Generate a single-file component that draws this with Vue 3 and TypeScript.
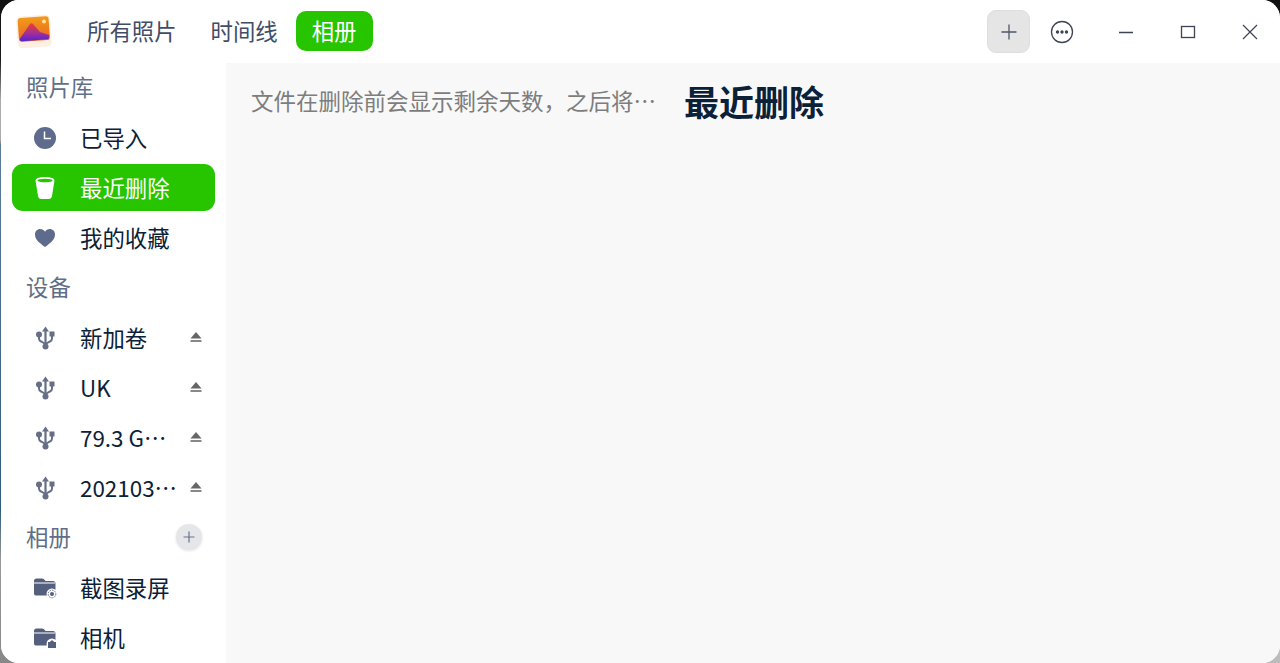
<template>
  <div class="window">
    <header class="titlebar">
      <svg class="logo" viewBox="0 0 36 36" width="36" height="36">
        <defs>
          <linearGradient id="sky" x1="0" y1="0" x2="0" y2="1">
            <stop offset="0" stop-color="#f39a1c" />
            <stop offset="1" stop-color="#e8641e" />
          </linearGradient>
          <linearGradient id="hill" x1="0" y1="0" x2="0" y2="1">
            <stop offset="0" stop-color="#e8402c" />
            <stop offset="0.55" stop-color="#a52f96" />
            <stop offset="1" stop-color="#4f22d8" />
          </linearGradient>
        </defs>
        <rect x="1" y="1.500" width="34" height="32" rx="5" fill="#fbf0e2" transform="rotate(-4 18 18)" />
        <rect x="2.500" y="3" width="31" height="24" rx="3" fill="url(#sky)" transform="rotate(-4 18 18)" />
        <path d="M4 24.500 L14 10 Q15.500 8.500 17 10 L24 18 L33 21 L33 23.500 Q33 25 31 25.300 L6 27.200 Q3.500 27.200 4 24.500 Z" fill="url(#hill)" />
        <circle cx="28" cy="7.500" r="2" fill="#ffe39a" />
      </svg>
      <nav class="tabs">
        <button v-for="tab in tabs" :key="tab" class="tab" :class="{ active: tab === '相册' }">{{ tab }}</button>
      </nav>
      <div class="actions">
        <button class="add-btn" aria-label="导入">
          <svg viewBox="0 0 18 18" width="18" height="18">
            <path d="M9 1.500v15M1.500 9h15" stroke="#4f5666" stroke-width="1.300" fill="none" />
          </svg>
        </button>
        <button class="icon-btn menu-btn" aria-label="菜单">
          <svg viewBox="0 0 24 24" width="24" height="24">
            <circle cx="12" cy="12" r="10.500" stroke="#3d4453" stroke-width="1.300" fill="none" />
            <circle cx="7.500" cy="12" r="1.700" fill="#3d4453" />
            <circle cx="12" cy="12" r="1.700" fill="#3d4453" />
            <circle cx="16.500" cy="12" r="1.700" fill="#3d4453" />
          </svg>
        </button>
        <button class="icon-btn win-btn" aria-label="最小化">
          <svg viewBox="0 0 16 16" width="16" height="16">
            <path d="M1 8.500h14" stroke="#3d4453" stroke-width="1.300" fill="none" />
          </svg>
        </button>
        <button class="icon-btn win-btn" aria-label="最大化">
          <svg viewBox="0 0 16 16" width="16" height="16">
            <rect x="1.500" y="2.500" width="13" height="11" stroke="#3d4453" stroke-width="1.300" fill="none" />
          </svg>
        </button>
        <button class="icon-btn win-btn" aria-label="关闭">
          <svg viewBox="0 0 16 16" width="16" height="16">
            <path d="M1 1l14 14M15 1L1 15" stroke="#3d4453" stroke-width="1.200" fill="none" />
          </svg>
        </button>
      </div>
    </header>

    <div class="body">
      <aside class="sidebar">
        <template v-for="group in groups" :key="group.title">
          <div class="section">
            <span class="section-title">{{ group.title }}</span>
            <button v-if="group.canAdd" class="section-add" aria-label="新建相册">
              <svg viewBox="0 0 12 12" width="12" height="12">
                <path d="M6 0.500v11M0.500 6h11" stroke="#6b7488" stroke-width="1.200" fill="none" />
              </svg>
            </button>
          </div>
          <div v-for="item in group.items" :key="item.label" class="row" :class="{ selected: item.selected }">
            <span class="row-icon">
              <svg v-if="item.icon === 'clock'" viewBox="0 0 24 24" width="24" height="24">
                <circle cx="12" cy="12" r="11" fill="#5f6b8c" />
                <path d="M11.500 5.500v7h6.500" stroke="#fff" stroke-width="1.500" fill="none" />
              </svg>
              <svg v-else-if="item.icon === 'trash'" viewBox="0 0 24 24" width="24" height="24">
                <path d="M2.500 4.500Q2.500 1 12 1t9.500 3.500L19 20q-.4 3-3.500 3h-7Q5.400 23 5 20Z" fill="#fff" />
                <ellipse cx="12" cy="4.500" rx="7.500" ry="1.700" fill="#27c400" />
              </svg>
              <svg v-else-if="item.icon === 'heart'" viewBox="0 0 24 24" width="24" height="24">
                <path d="M12 21C6 16.500 2 13.500 2 8.500 2 5.300 4.300 3 7.200 3c2 0 3.700 1 4.800 2.800C13.100 4 14.800 3 16.800 3 19.700 3 22 5.300 22 8.500c0 5-4 8-10 12.500Z" fill="#5f6b8c" />
              </svg>
              <svg v-else-if="item.icon === 'usb'" viewBox="0 0 24 24" width="24" height="24">
                <path d="M12.500 3v17" stroke="#666f85" stroke-width="2.200" fill="none" />
                <path d="M6 10v2.500q0 2 2 3l4.500 2.500M19 9v3.500q0 2-2 3l-4.500 2.500" stroke="#666f85" stroke-width="2" fill="none" />
                <path d="M12.500 0.500l3.500 5h-7Z" fill="#666f85" />
                <circle cx="12.500" cy="20.500" r="3" fill="#666f85" />
                <circle cx="6" cy="8.500" r="3" fill="#666f85" />
                <rect x="16.500" y="5.500" width="5" height="5" fill="#666f85" />
              </svg>
              <svg v-else viewBox="0 0 24 24" width="24" height="24">
                <path d="M1 5q0-2.500 2.500-2.500h5.500q1.200 0 2 .8l1.500 1.700h7.500q2.500 0 2.500 2.500v9.500q0 2.500-2.500 2.500H3.500Q1 20 1 17.500Z" fill="#55607f" />
                <path d="M1 7h21" stroke="#fff" stroke-width="1" />
                <circle cx="19" cy="18" r="5.500" fill="#fff" />
                <template v-if="item.icon === 'shot'">
                  <circle cx="19" cy="18" r="3.800" stroke="#55607f" stroke-width="0.900" stroke-dasharray="1.500 1" fill="none" />
                  <circle cx="19" cy="18" r="2" fill="#55607f" />
                </template>
                <path v-else d="M15 16h2l1-1.500h2l1 1.500h2v6h-8Z" fill="#55607f" />
              </svg>
            </span>
            <span class="row-label">{{ item.label }}</span>
            <svg v-if="group.eject" class="eject" viewBox="0 0 12 12" width="12" height="12">
              <path d="M6 1l5.500 6.500H.5Z" fill="#666" />
              <rect x="0.500" y="9" width="11" height="2" fill="#888" />
            </svg>
          </div>
        </template>
      </aside>
      <main class="content">
        <p class="hint">文件在删除前会显示剩余天数，之后将永久删除</p>
        <h1 class="title">最近删除</h1>
      </main>
    </div>
  </div>
</template>

<script setup lang="ts">
interface Item {
  label: string
  icon: string
  selected?: boolean
}

interface Group {
  title: string
  canAdd?: boolean
  eject?: boolean
  items: Item[]
}

const tabs = ['所有照片', '时间线', '相册']

const groups: Group[] = [
  {
    title: '照片库',
    items: [
      { label: '已导入', icon: 'clock' },
      { label: '最近删除', icon: 'trash', selected: true },
      { label: '我的收藏', icon: 'heart' }
    ]
  },
  {
    title: '设备',
    eject: true,
    items: [
      { label: '新加卷', icon: 'usb' },
      { label: 'UK', icon: 'usb' },
      { label: '79.3 GB 卷', icon: 'usb' },
      { label: '20210315_backup', icon: 'usb' }
    ]
  },
  {
    title: '相册',
    canAdd: true,
    items: [
      { label: '截图录屏', icon: 'shot' },
      { label: '相机', icon: 'camera' }
    ]
  }
]
</script>

<style>
html,
body {
  margin: 0;
  height: 100%;
  overflow: hidden;
  background:
    linear-gradient(180deg, #111 0, #1a1a1a 60px, #aaa 100px, #aaa 140px, #5b7c99 145px, #2f5d7c 510px, #999 560px, #888 100%) 0 0 / 50% 100% no-repeat,
    linear-gradient(180deg, #111 0, #1a1a1a 60px, #ccc 600px, #bbb 100%) 100% 0 / 50% 100% no-repeat;
}
</style>

<style scoped>
.window {
  height: 663px;
  margin-left: 1px;
  border-radius: 18px;
  overflow: hidden;
  display: flex;
  flex-direction: column;
  background: #fff;
  font-family: "Noto Sans CJK SC", "Noto Sans", sans-serif;
  color: #0a2138;
}

button {
  border: 0;
  padding: 0;
  background: none;
  font: inherit;
  color: inherit;
}

.titlebar {
  height: 63px;
  flex: none;
  display: flex;
  align-items: center;
  padding-left: 15px;
  background: #fff;
}

.logo {
  flex: none;
}

.tabs {
  display: flex;
  align-items: center;
  margin-left: 18px;
  margin-top: -1px;
}

.tab {
  height: 40px;
  padding: 0 17px 2px;
  box-sizing: border-box;
  font-size: 22.400px;
  line-height: 38px;
  color: #414d68;
  border-radius: 10px;
}

.tab.active {
  padding: 0 16px 2px;
  margin-left: 1px;
  background: #27c400;
  color: #fff;
}

.actions {
  margin-left: auto;
  margin-right: -1px;
  display: flex;
  align-items: center;
}

.add-btn {
  width: 43px;
  height: 43px;
  display: flex;
  align-items: center;
  justify-content: center;
  box-sizing: border-box;
  background: #e5e5e5;
  border: 1px solid #dedede;
  border-radius: 9px;
}

.icon-btn {
  display: flex;
  align-items: center;
  justify-content: center;
}

.menu-btn {
  width: 24px;
  height: 24px;
  margin: 0 21px 0 20px;
}

.win-btn {
  width: 62px;
  height: 40px;
}

.body {
  flex: 1;
  min-height: 0;
  display: flex;
}

.sidebar {
  width: 225px;
  flex: none;
  box-sizing: border-box;
  padding: 0 11px;
  display: flex;
  flex-direction: column;
  background: #fff;
  overflow: hidden;
}

.section {
  height: 50px;
  flex: none;
  display: flex;
  align-items: center;
  justify-content: space-between;
  padding: 0 13px 0 14px;
  font-size: 22.400px;
  color: #5f6f88;
}

.section-title {
  margin-bottom: 4px;
}

.section-add {
  width: 26px;
  height: 26px;
  margin-bottom: 2px;
  display: flex;
  align-items: center;
  justify-content: center;
  background: #e4e6e9;
  border-radius: 50%;
  box-shadow: 0 1px 3px rgba(0, 0, 0, 0.12);
}

.row {
  height: 47px;
  flex: none;
  margin: 1px 0 2px;
  display: flex;
  align-items: center;
  padding: 0 13px 0 21px;
  font-size: 22.400px;
  border-radius: 11px;
  color: #0a2138;
}

.row.selected {
  background: #27c400;
  color: #fff;
}

.row-icon {
  width: 24px;
  height: 24px;
  flex: none;
  display: flex;
}

.row-label {
  margin-left: 23px;
  margin-bottom: 2px;
  flex: 1;
  min-width: 0;
  white-space: nowrap;
  overflow: hidden;
  text-overflow: ellipsis;
}

.eject {
  flex: none;
  margin-left: 10px;
  margin-bottom: 2px;
}

.content {
  flex: 1;
  min-width: 0;
  display: flex;
  align-items: flex-start;
  background: #f8f8f8;
  padding-left: 25px;
}

.hint {
  width: 406px;
  margin: 20px 0 0;
  font-size: 22.500px;
  line-height: 34px;
  color: #7d7d7d;
  white-space: nowrap;
  overflow: hidden;
  text-overflow: ellipsis;
}

.title {
  margin: 13px 0 0 27px;
  font-size: 35px;
  line-height: 50px;
  font-weight: 700;
  color: #0a2138;
}
</style>
